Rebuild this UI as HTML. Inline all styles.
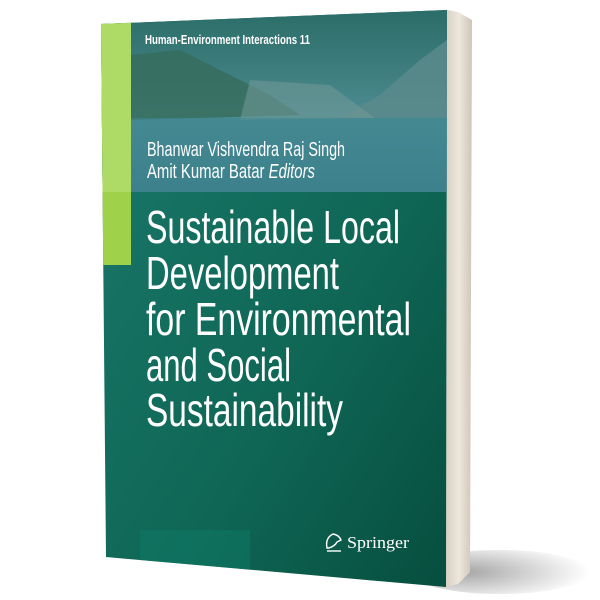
<!DOCTYPE html>
<html><head><style>
html,body{margin:0;padding:0;background:#fff;width:600px;height:600px;overflow:hidden}
svg{display:block}
text{font-family:"Liberation Sans Narrow","Liberation Sans",sans-serif;fill:#fff}
</style></head><body>
<svg width="600" height="600" viewBox="0 0 600 600">
<defs>
<linearGradient id="g" x1="0" y1="0" x2="1" y2="1">
<stop offset="0" stop-color="#1b7a6d"/><stop offset="0.6" stop-color="#0f6655"/><stop offset="1" stop-color="#064c3d"/>
</linearGradient>
<linearGradient id="sky" x1="0" y1="0" x2="0" y2="1">
<stop offset="0" stop-color="#2a6a66"/><stop offset="0.45" stop-color="#4f8a90"/><stop offset="0.6" stop-color="#5b97a6"/><stop offset="1" stop-color="#3f7f90"/>
</linearGradient>
<linearGradient id="pg" x1="0" y1="0" x2="1" y2="0">
<stop offset="0" stop-color="#d9d0c4"/><stop offset="0.5" stop-color="#eee7dc"/><stop offset="1" stop-color="#cfc5b8"/>
</linearGradient>
<radialGradient id="sh" cx="0.3" cy="0.5" r="0.7">
<stop offset="0" stop-color="#000" stop-opacity="0.35"/><stop offset="1" stop-color="#000" stop-opacity="0"/>
</radialGradient>
<clipPath id="c"><polygon points="101,24 447,10 446,587 106,557"/></clipPath>
</defs>
<ellipse cx="500" cy="572" rx="90" ry="22" fill="url(#sh)"/>
<polygon points="447,10 458,12 472,20 470,572 458,584 446,587" fill="url(#pg)"/>
<g clip-path="url(#c)">
<rect x="90" y="0" width="370" height="600" fill="url(#g)"/>
<rect x="90" y="0" width="370" height="192" fill="url(#sky)"/>
<polygon points="340,118 380,95 420,60 447,40 447,118" fill="#6e949a" opacity="0.85"/>
<polygon points="130,55 180,50 220,70 270,95 300,115 130,120" fill="#3d6b5a" opacity="0.8"/>
<polygon points="250,80 330,85 375,118 240,120" fill="#8aa7a8" opacity="0.6"/>
<rect x="90" y="118" width="370" height="74" fill="#4a8fa3" opacity="0.55"/>
<rect x="90" y="0" width="370" height="192" fill="#1e6a60" opacity="0.25"/>
<rect x="90" y="0" width="41" height="265" fill="#9fd14a"/>
<rect x="90" y="0" width="41" height="192" fill="#b9e07a" opacity="0.6"/>
<rect x="140" y="530" width="110" height="40" fill="#0e7a66" opacity="0.5"/>
</g>
<text x="145" y="44" font-size="12.5" font-weight="bold" textLength="165" lengthAdjust="spacingAndGlyphs">Human-Environment Interactions   11</text>
<text x="147" y="156" font-size="20" textLength="198" lengthAdjust="spacingAndGlyphs">Bhanwar Vishvendra Raj Singh</text>
<text x="147" y="178" font-size="20" textLength="168" lengthAdjust="spacingAndGlyphs">Amit Kumar Batar  <tspan font-style="italic">Editors</tspan></text>
<g font-size="46">
<text x="146" y="243" textLength="254" lengthAdjust="spacingAndGlyphs">Sustainable Local</text>
<text x="146" y="289" textLength="193" lengthAdjust="spacingAndGlyphs">Development</text>
<text x="146" y="335" textLength="265" lengthAdjust="spacingAndGlyphs">for Environmental</text>
<text x="146" y="381" textLength="145" lengthAdjust="spacingAndGlyphs">and Social</text>
<text x="146" y="426" textLength="197" lengthAdjust="spacingAndGlyphs">Sustainability</text>
</g>
<g stroke="#fff" stroke-width="1.4" fill="none">
<path d="M327 548 q-2-10 6-14 q6 1 8 6 l-4 2 q-2 4 -8 6 z"/><path d="M327 551 h14"/>
</g>
<text x="347" y="548" font-size="17" style="font-family:'Liberation Serif',serif" textLength="62" lengthAdjust="spacingAndGlyphs">Springer</text>
</svg>
</body></html>
